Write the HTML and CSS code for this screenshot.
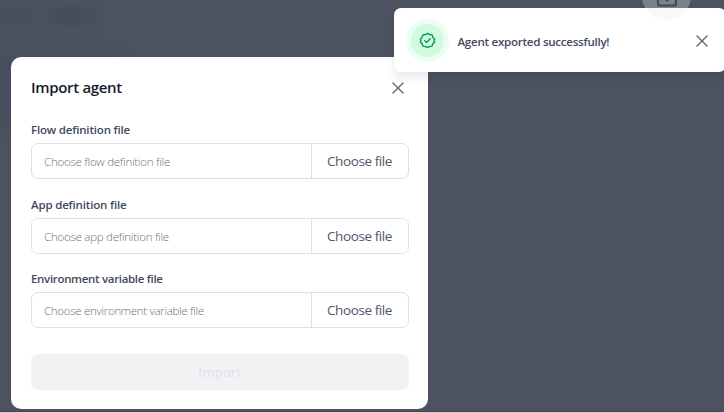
FILE: index.html
```html
<!DOCTYPE html>
<html lang="en">
<head>
<meta charset="utf-8">
<title>Import agent</title>
<link rel="stylesheet" href="styles.css">
</head>
<body>
<div class="backdrop">
  <span class="shade shade-a"></span>
  <span class="shade shade-b"></span>
  <span class="shade shade-c"></span>
</div>
<main class="dialog">
  <header class="dialog-header">
    <h1 class="title">Import agent</h1>
    <button class="close" aria-label="Close"><svg width="12" height="12" viewBox="0 0 12 12"><path d="M1 1l10 10M11 1L1 11"/></svg></button>
  </header>
  <div class="field">
    <label class="label">Flow definition file</label>
    <div class="picker"><div class="hint">Choose flow definition file</div><button class="choose">Choose file</button></div>
  </div>
  <div class="field">
    <label class="label">App definition file</label>
    <div class="picker"><div class="hint">Choose app definition file</div><button class="choose">Choose file</button></div>
  </div>
  <div class="field">
    <label class="label label-env">Environment variable file</label>
    <div class="picker"><div class="hint hint-env">Choose environment variable file</div><button class="choose">Choose file</button></div>
  </div>
  <button class="submit" disabled>Import</button>
</main>
<aside class="toast">
  <span class="badge"><svg width="17" height="17" viewBox="0 0 24 24"><path d="M12 2l3 1.6 3.5.5 1 3.4L22 10.2 21.3 12l.7 2.3-2.5 2.4-1 3.2-3.5.5L12 22l-3-1.600-3.500-.5-1-3.200L2 14.300 2.700 12 2 10.200l2.500-2.700 1-3.400L9 3.600z"/><path d="M8.200 12.200l2.600 2.500 5-5"/></svg></span>
  <p class="message">Agent exported successfully!</p>
  <button class="close" aria-label="Dismiss"><svg width="12" height="12" viewBox="0 0 12 12"><path d="M1 1l10 10M11 1L1 11"/></svg></button>
</aside>
<div class="ghost"><svg width="20" height="18" viewBox="0 0 20 18"><path d="M1 10v5a1.500 1.500 0 0 0 1.500 1.500h15a1.500 1.500 0 0 0 1.500-1.500v-5M10 1v10.500M6 7.500l4 4 4-4"/></svg></div>
</body>
</html>
```
FILE: styles.css
```css
* { box-sizing: border-box; }
body {
  margin: 0;
  width: 724px;
  height: 412px;
  position: relative;
  overflow: hidden;
  font-family: "Open Sans", "Noto Sans", sans-serif;
  color: #3f495c;
}
button { font: inherit; color: inherit; padding: 0; margin: 0; border: 0; background: none; }
svg { display: block; fill: none; stroke: currentColor; stroke-linecap: round; stroke-linejoin: round; }
.backdrop {
  position: absolute;
  inset: 0;
  background: #4c525f;
  border-bottom: 1px solid #414655;
}
.shade { position: absolute; filter: blur(6px); background: #454c58; }
.shade-a { left: 4px; top: 8px; width: 25px; height: 16px; }
.shade-b { left: 50px; top: 8px; width: 42px; height: 16px; }
.shade-c { left: -8px; top: 52px; width: 128px; height: 80px; background: #474e5d; }
.dialog {
  position: absolute;
  left: 11px;
  top: 57px;
  width: 417px;
  height: 351.5px;
  padding: 20px 19.5px 0 20px;
  border-radius: 10px;
  background: #fff;
}
.dialog-header {
  display: flex;
  justify-content: space-between;
  height: 42px;
  padding-right: 4.5px;
}
.title {
  margin: 0;
  font-size: 15px;
  line-height: 21px;
  font-weight: 600;
  letter-spacing: -0.33px;
  color: #131c2d;
}
.close { color: #5b6579; display: block; }
.close svg { stroke-width: 1.4; }
.dialog-header .close { height: 21px; }
.field { height: 74.5px; }
.label {
  display: block;
  height: 24.4px;
  font-size: 11.5px;
  line-height: 21px;
  font-weight: 600;
  letter-spacing: -0.18px;
  white-space: nowrap;
}
.label-env { letter-spacing: -0.32px; }
.picker {
  display: flex;
  height: 36px;
  border: 1px solid #dcdfe6;
  border-radius: 7px;
}
.hint {
  flex: 1;
  padding-left: 12px;
  font-size: 11.5px;
  line-height: 36px;
  font-weight: 300;
  letter-spacing: -0.25px;
  color: #687284;
  white-space: nowrap;
}
.hint-env { letter-spacing: -0.3px; }
.choose {
  width: 97px;
  border-left: 1px solid #dcdfe6;
  font-size: 13.5px;
  line-height: 35px;
  letter-spacing: -0.4px;
  color: #4d576a;
  white-space: nowrap;
}
.submit {
  display: block;
  width: 100%;
  height: 36px;
  margin-top: 11.5px;
  border-radius: 7px;
  background: #f1f2f4;
  color: #e1e4ea;
  font-size: 13px;
  font-weight: 600;
}
.toast {
  position: absolute;
  left: 394px;
  top: 8px;
  width: 332px;
  height: 64px;
  padding: 0 18px 0 17px;
  display: flex;
  align-items: center;
  border-radius: 7px;
  background: #fff;
  box-shadow: 0 6px 9px rgba(16, 24, 40, .09);
}
.badge {
  width: 33px;
  height: 33px;
  display: grid;
  place-items: center;
  border-radius: 50%;
  background: #d1fadf;
  box-shadow: 0 0 0 5px #ecfdf3;
  color: #099a56;
}
.badge svg { stroke-width: 2; }
.message {
  flex: 1;
  margin: 3px 0 0 13.5px;
  font-size: 11.5px;
  line-height: 20px;
  font-weight: 600;
  letter-spacing: -0.23px;
  white-space: nowrap;
}
.toast .close { margin-top: 1px; }
.ghost {
  position: absolute;
  left: 642px;
  top: -28px;
  width: 49px;
  height: 48px;
  padding: 17px 0 0 14.5px;
  border-radius: 50%;
  background: linear-gradient(#7b808a 36px, rgba(70, 75, 85, .035) 36px);
  color: #414956;
}
.ghost svg { stroke-width: 2; }
```
